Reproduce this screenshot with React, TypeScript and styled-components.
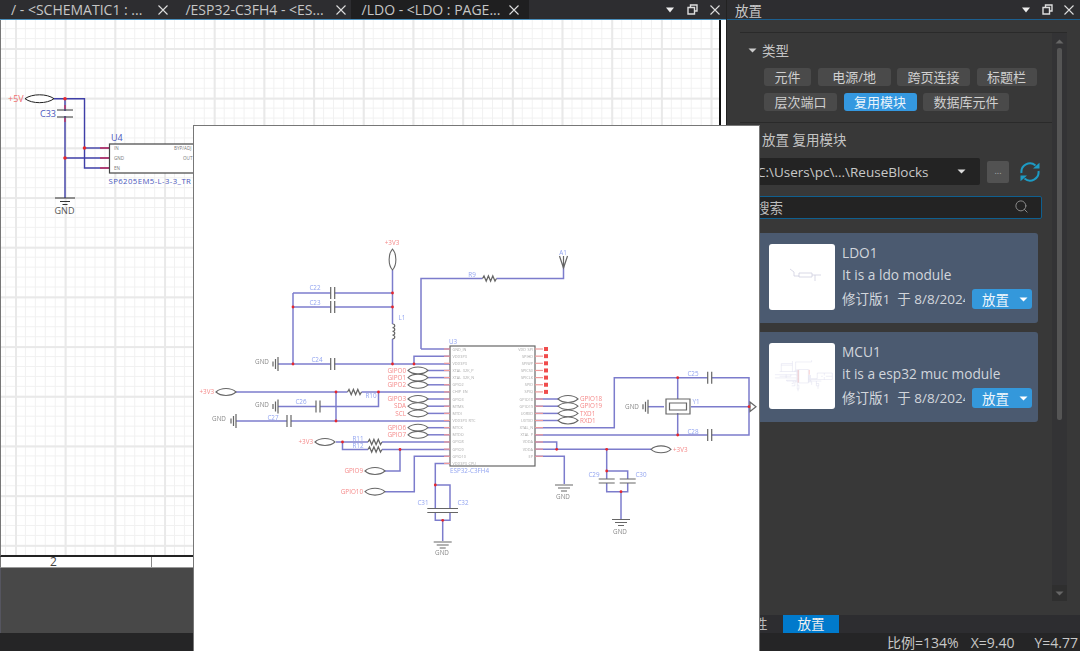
import styled, { createGlobalStyle } from 'styled-components';
import { Search } from 'lucide-react';

const PIN_TOP = 348;
const PIN_STEP = 7.15;
const pinY = (i: number) => PIN_TOP + PIN_STEP * i;

const leftPins = ['GND_IN', 'VDD3P3', 'VDD3P3', 'XTAL_32K_P', 'XTAL_32K_N', 'GPIO2', 'CHIP_EN', 'GPIO3', 'MTMS', 'MTDI', 'VDD3P3_RTC', 'MTCK', 'MTDO', 'GPIO8', 'GPIO9', 'GPIO10', 'VDD3P3_CPU'];
const rightPins = ['VDD_SPI', 'SPIHD', 'SPIWP', 'SPICS0', 'SPICLK', 'SPID', 'SPIQ', 'GPIO18', 'GPIO19', 'U0RXD', 'U0TXD', 'XTAL_N', 'XTAL_P', 'VDDA', 'VDDA', 'EP'];

const mcuWires = [
	'M391.5 269V363', 'M292 292H391.5', 'M292 306H391.5', 'M292 292V363', 'M277 363H449',
	'M413 363V355.2H449', 'M420 348V277.5H562.5V262', 'M420 348H449',
	'M235 391H449', 'M377.5 391V405.5H277', 'M335 391V420', 'M235 420H449',
	'M335 441H449', 'M341.5 441V448.5H449', 'M399 448.5V470H384', 'M449 455.3H413.3V490.7H384',
	'M449 462.4H434.3V519.3H449V484H434.3', 'M441.7 519.3V540',
	'M427 369.5H449', 'M427 376.6H449', 'M427 383.8H449', 'M427 398H449', 'M427 405.2H449', 'M427 412.4H449', 'M427 426.7H449', 'M427 433.8H449',
	'M534 398H557', 'M534 405.2H557', 'M534 412.4H557', 'M534 419.5H557',
	'M534 426.7H613.3V376.7H748V434H534', 'M676.7 376.7V398', 'M676.7 412V434', 'M690 405.7H748', 'M647 405.7H663',
	'M534 441H555.7V448.3', 'M534 448.3H650', 'M534 455.3H563.3V483',
	'M605.7 448.3V490.7H626.7V470H605.7', 'M620 490.7V518',
];

const mcuDots = [
	[391.5, 292], [391.5, 306], [292, 306], [292, 363], [391.5, 363], [413, 363], [335, 391], [377.5, 391], [335, 420],
	[341.5, 441], [399, 448.5], [434.3, 484], [441.7, 519.3], [676.7, 376.7], [676.7, 434], [748, 405.7],
	[555.7, 448.3], [605.7, 448.3], [605.7, 470], [620, 490.7],
];

const ldoWires = ['M54 98.7H84.5V168H109', 'M65 98.7V198', 'M84.5 148H109', 'M65 158H109'];

const ports: [number, number, string, boolean][] = [
	[369.5, 407, 'GIPO0', true], [376.6, 407, 'GIPO1', true], [383.8, 407, 'GIPO2', true],
	[398, 407, 'GIPO3', true], [405.2, 407, 'SDA', true], [412.4, 407, 'SCL', true],
	[426.7, 407, 'GPIO6', true], [433.8, 407, 'GPIO7', true],
	[391, 215, '+3V3', true], [441, 314, '+3V3', true], [470, 364, 'GPIO9', true], [490.7, 364, 'GPIO10', true],
	[398, 557, 'GPIO18', false], [405.2, 557, 'GPIO19', false], [412.4, 557, 'TXD1', false], [419.5, 557, 'RXD1', false],
	[448.3, 650, '+3V3', false],
];

const blueLabels: [number, number, string][] = [
	[314, 289, 'C22'], [314, 304, 'C23'], [316, 361, 'C24'], [300, 403, 'C26'], [272, 419, 'C27'],
	[401, 319, 'L1'], [471, 276, 'R9'], [370, 397, 'R10'], [357, 440, 'R11'], [357, 447, 'R12'],
	[422, 504, 'C31'], [462, 504, 'C32'], [593, 476, 'C29'], [640, 476, 'C30'],
	[692, 375, 'C25'], [692, 433, 'C28'], [695, 403, 'Y1'], [562, 254, 'A1'], [452, 343, 'U3'],
];

const HexPort = ({ x, y, width = 20 }: { x: number; y: number; width?: number }) => (
	<PortShape d={`M${x} ${y}C${x + 5} ${y - 4.6} ${x + width - 5} ${y - 4.6} ${x + width} ${y}C${x + width - 5} ${y + 4.6} ${x + 5} ${y + 4.6} ${x} ${y}Z`} />
);

const SeriesCap = ({ x, y }: { x: number; y: number }) => (
	<g>
		<Gap x={x - 2} y={y - 2} width={4} height={4} />
		<Part d={`M${x - 2} ${y - 6}v12M${x + 2} ${y - 6}v12`} />
	</g>
);

const ShuntCap = ({ x, y }: { x: number; y: number }) => (
	<g>
		<Gap x={x - 2} y={y - 2} width={4} height={4} />
		<Part d={`M${x - 8} ${y - 2}h16M${x - 8} ${y + 2}h16`} />
	</g>
);

const Resistor = ({ x, y }: { x: number; y: number }) => (
	<g>
		<Gap x={x} y={y - 2} width={14} height={4} />
		<Part d={`M${x} ${y}l1.5 -2.6l2.2 5.2l2.2 -5.2l2.2 5.2l2.2 -5.2l2.2 5.2l1.5 -2.6`} />
	</g>
);

const GroundDown = ({ x, y }: { x: number; y: number }) => (
	<Part d={`M${x - 9} ${y}h18M${x - 6} ${y + 3}h12M${x - 3} ${y + 6}h6`} />
);

const GroundLeft = ({ x, y }: { x: number; y: number }) => (
	<Part d={`M${x} ${y - 7}v14M${x - 2.5} ${y - 5}v10M${x - 5} ${y - 2.5}v5`} />
);

const McuSheet = () => (
	<PreviewSvg viewBox="193 125 565 526">
		{mcuWires.map((d, i) => (
			<BlueWire key={i} d={d} />
		))}
		<IcBody x={449} y={345} width={85} height={120} />
		{leftPins.map((name, i) => (
			<g key={name + i}>
				<PinStub d={`M443 ${pinY(i)}h6`} />
				<PinName x={451.5} y={pinY(i) + 1.5}>
					{name}
				</PinName>
			</g>
		))}
		{rightPins.map((name, i) => (
			<g key={name + i}>
				<PinStub d={`M534 ${pinY(i)}h8`} />
				<PinName x={532} y={pinY(i) + 1.5} textAnchor="end">
					{name}
				</PinName>
				{i < 7 && <NoConnect x={543} y={pinY(i) - 2} width={4} height={4} />}
			</g>
		))}
		{ports.map(([y, x, name, onLeft], i) => (
			<g key={i}>
				<HexPort x={x} y={y} />
				<RedLabel x={onLeft ? x - 2 : x + 22} y={y + 2.2} textAnchor={onLeft ? 'end' : 'start'}>
					{name}
				</RedLabel>
			</g>
		))}
		<PortShape d="M391.5 248C396 253 396 264 391.5 269C387 264 387 253 391.5 248Z" />
		<RedLabel x={391} y={244} textAnchor="middle">
			+3V3
		</RedLabel>
		<SeriesCap x={331.7} y={292} />
		<SeriesCap x={331.7} y={306} />
		<SeriesCap x={331.7} y={363} />
		<SeriesCap x={317} y={405.5} />
		<SeriesCap x={288} y={420} />
		<SeriesCap x={708.7} y={376.7} />
		<SeriesCap x={708.7} y={434} />
		<ShuntCap x={434.3} y={509.5} />
		<ShuntCap x={449} y={509.5} />
		<ShuntCap x={605.7} y={480} />
		<ShuntCap x={626.7} y={480} />
		<Resistor x={346.5} y={391} />
		<Resistor x={481.5} y={277.5} />
		<Resistor x={367} y={441} />
		<Resistor x={367} y={448.5} />
		<Gap x={390} y={323} width={3} height={15} />
		<Part d="M391.5 323c3 0 3 3.7 0 3.7c3 0 3 3.7 0 3.7c3 0 3 3.7 0 3.7c3 0 3 3.7 0 3.7" />
		<Part d="M558.5 255l4 12l4 -12M562.5 255v12" />
		<Part d="M665 398h24v15h-24zM668.5 402h17v7h-17z" />
		<GroundLeft x={277} y={363} />
		<GroundLeft x={277} y={405.5} />
		<GroundLeft x={235} y={420} />
		<GroundLeft x={647} y={405.7} />
		<GroundDown x={563} y={484} />
		<GroundDown x={620} y={518.5} />
		<GroundDown x={441.7} y={541} />
		<Part d="M749 401l6 4.7l-6 4.7Z" />
		<GrayLabel x={261} y={363} textAnchor="middle">GND</GrayLabel>
		<GrayLabel x={261} y={406} textAnchor="middle">GND</GrayLabel>
		<GrayLabel x={218} y={420} textAnchor="middle">GND</GrayLabel>
		<GrayLabel x={631} y={407.5} textAnchor="middle">GND</GrayLabel>
		<GrayLabel x={562} y={498} textAnchor="middle">GND</GrayLabel>
		<GrayLabel x={619} y={533} textAnchor="middle">GND</GrayLabel>
		<GrayLabel x={441} y={554} textAnchor="middle">GND</GrayLabel>
		{blueLabels.map(([x, y, name]) => (
			<BlueLabel key={name} x={x} y={y} textAnchor="middle">
				{name}
			</BlueLabel>
		))}
		<BlueLabel x={449} y={472}>ESP32-C3FH4</BlueLabel>
		{mcuDots.map(([x, y], i) => (
			<Dot key={i} cx={x} cy={y} r={1.4} />
		))}
	</PreviewSvg>
);

const LdoSheet = () => (
	<SheetSvg viewBox="1 20 719 534">
		{ldoWires.map((d, i) => (
			<DarkWire key={i} d={d} />
		))}
		<PinStubDark d="M100 148h10M100 158h10M100 168h10M65 105v4M65 118v4" />
		<Gap x={60} y={111} width={10} height={5} />
		<SheetPart d="M57 110h16M57 117h16M55 198h20M60 201.5h10M62.5 204.5h5" />
		<SheetPort d="M25 98.7C32 93.5 47 93.5 54 98.7C47 104 32 104 25 98.7Z" />
		<UnitBox x={109.5} y={144} width={100} height={29} />
		<SheetRed x={8} y={102}>+5V</SheetRed>
		<SheetBlue x={40} y={117}>C33</SheetBlue>
		<SheetBlue x={111} y={141}>U4</SheetBlue>
		<SheetBlueSmall x={108.5} y={184}>SP6205EM5-L-3-3_TR</SheetBlueSmall>
		<SheetGray x={64.5} y={214} textAnchor="middle">GND</SheetGray>
		<SheetPin x={114} y={150}>IN</SheetPin>
		<SheetPin x={114} y={160}>GND</SheetPin>
		<SheetPin x={114} y={170}>EN</SheetPin>
		<SheetPin x={174} y={150}>BYP/ADJ</SheetPin>
		<SheetPin x={183} y={160}>OUT</SheetPin>
		<Dot cx={65} cy={98.7} r={1.8} />
		<Dot cx={84.5} cy={148} r={1.8} />
		<Dot cx={65} cy={158} r={1.8} />
	</SheetSvg>
);

const WindowControls = () => (
	<>
		<svg width="10" height="6" viewBox="0 0 10 6">
			<path d="M1 0.5h8L5 5.5Z" fill="#eee" />
		</svg>
		<svg width="11" height="11" viewBox="0 0 11 11">
			<path d="M3.5 3V1H10V7H8M1 3.5H7.5V10H1Z" fill="none" stroke="#ddd" strokeWidth="1.4" />
		</svg>
		<CloseMark />
	</>
);

const CloseMark = () => (
	<svg width="10" height="10" viewBox="0 0 10 10">
		<path d="M0.5 0.5L9.5 9.5M9.5 0.5L0.5 9.5" stroke="#ddd" strokeWidth="1.1" />
	</svg>
);

const Caret = ({ color = '#ddd' }: { color?: string }) => (
	<svg width="9" height="5" viewBox="0 0 9 5">
		<path d="M0.5 0.5h8L4.5 4.5Z" fill={color} />
	</svg>
);

const RefreshIcon = () => (
	<svg width="22" height="22" viewBox="0 0 22 22" fill="none">
		<path d="M2.5 12A8.5 8.5 0 0 1 16.5 4.5" stroke="#1d9bc4" strokeWidth="2" />
		<path d="M19.5 10A8.5 8.5 0 0 1 5.5 17.5" stroke="#1d9bc4" strokeWidth="2" />
		<path d="M14 7.5h6.5V1.8Z" fill="#1d9bc4" />
		<path d="M8 14.5H1.5v5.7Z" fill="#1d9bc4" />
	</svg>
);

const docTabs = [
	{ title: '/ - <SCHEMATIC1 : ...', gap: 16, trail: 6 },
	{ title: '/ESP32-C3FH4 - <ES...', gap: 12, trail: 5 },
	{ title: '/LDO - <LDO : PAGE...', gap: 9, trail: 10, active: true },
];

const chipRows = [
	[{ name: '元件' }, { name: '电源/地', wide: true }, { name: '跨页连接' }, { name: '标题栏' }],
	[{ name: '层次端口' }, { name: '复用模块', active: true }, { name: '数据库元件' }],
];

const App = () => {
	return (
		<>
			<GlobalStyle />
			<Shell>
				<DocumentArea>
					<TabBar>
						{docTabs.map((tab) => (
							<DocTab key={tab.title} $active={tab.active} $gap={tab.gap} $trail={tab.trail}>
								<TabTitle>{tab.title}</TabTitle>
								<CloseMark />
							</DocTab>
						))}
						<TabControls>
							<WindowControls />
						</TabControls>
					</TabBar>
					<CanvasRow>
						<Sheet>
							<LdoSheet />
						</Sheet>
						<SheetEdge />
					</CanvasRow>
					<TitleStrip>
						<TitleZone>2</TitleZone>
					</TitleStrip>
					<EmptyArea />
				</DocumentArea>

				<SidePanel>
					<PanelHeader>
						<PanelTitle>放置</PanelTitle>
						<HeaderControls>
							<WindowControls />
						</HeaderControls>
					</PanelHeader>
					<PanelBody>
						<ScrollFrame>
							<PanelContent>
								<TypeSection>
									<SectionHeading>
										<HeadingCaret>
											<Caret color="#ccc" />
										</HeadingCaret>
										类型
									</SectionHeading>
									{chipRows.map((row, i) => (
										<ChipRow key={i}>
											{row.map((chip) => (
												<TypeChip key={chip.name} $active={chip.active} $wide={chip.wide}>
													{chip.name}
												</TypeChip>
											))}
										</ChipRow>
									))}
								</TypeSection>
								<PlaceSection>
									<SectionHeading>
										<HeadingCaret>
											<Caret color="#ccc" />
										</HeadingCaret>
										放置 复用模块
									</SectionHeading>
									<PathRow>
										<PathSelect>
											<span>C:\Users\pc\...\ReuseBlocks</span>
											<Caret />
										</PathSelect>
										<DotsButton>...</DotsButton>
										<RefreshIcon />
									</PathRow>
									<SearchBox>
										<span>搜索</span>
										<Search size={15} color="#8a8a8a" strokeWidth={1.6} />
									</SearchBox>
									<CardList>
										<BlockCard>
											<Thumb>
												<svg viewBox="0 0 66 66" width="66" height="66">
													<ThumbLines d="M21 25l4 3v4h5M30 29h13v4H30zM43 31h9M46 31v6" />
												</svg>
											</Thumb>
											<CardText>
												<CardName>LDO1</CardName>
												<CardDesc>It is a ldo module</CardDesc>
												<CardFoot>
													<CardMeta>修订版1&nbsp; 于 8/8/2024</CardMeta>
													<PlaceButton>
														放置
														<Caret color="#fff" />
													</PlaceButton>
												</CardFoot>
											</CardText>
										</BlockCard>
										<BlockCard>
											<Thumb>
												<svg viewBox="182 108 590 590" width="66" height="66">
													<ThumbGroup>
														{mcuWires.map((d, i) => (
															<path key={i} d={d} />
														))}
														<path d="M449 345h85v120h-85z" />
													</ThumbGroup>
													<ThumbPins d="M443 348V462M542 348V391" />
												</svg>
											</Thumb>
											<CardText>
												<CardName>MCU1</CardName>
												<CardDesc>it is a esp32 muc module</CardDesc>
												<CardFoot>
													<CardMeta>修订版1&nbsp; 于 8/8/2024</CardMeta>
													<PlaceButton>
														放置
														<Caret color="#fff" />
													</PlaceButton>
												</CardFoot>
											</CardText>
										</BlockCard>
									</CardList>
								</PlaceSection>
							</PanelContent>
							<ScrollTrack>
								<svg width="9" height="5" viewBox="0 0 9 5">
									<path d="M0.5 4.5h8L4.5 0.5Z" fill="#666" />
								</svg>
								<ScrollThumb />
								<ScrollEnd>
									<Caret color="#666" />
								</ScrollEnd>
							</ScrollTrack>
						</ScrollFrame>
					</PanelBody>
					<PanelTabs>
						<PanelTab>属性</PanelTab>
						<PanelTab $active>放置</PanelTab>
					</PanelTabs>
				</SidePanel>

				<StatusBar>
					<span>比例=134%</span>
					<span>X=9.40</span>
					<span>Y=4.77</span>
				</StatusBar>

				<PreviewImage>
					<McuSheet />
				</PreviewImage>
			</Shell>
		</>
	);
};

const GlobalStyle = createGlobalStyle`
	html, body {
		margin: 0;
		height: 100%;
		overflow: hidden;
		background: #2d2d30;
	}
	body {
		font-family: 'Open Sans', 'Noto Sans CJK SC', sans-serif;
	}
`;

const Shell = styled.div`
	position: relative;
	width: 1080px;
	height: 651px;
	display: grid;
	grid-template-columns: 727px 353px;
	grid-template-rows: 633px 18px;
	overflow: hidden;
	color: #ccc;
`;

const DocumentArea = styled.div`
	display: flex;
	flex-direction: column;
	min-height: 0;
	border-right: 1px solid #222;
`;

const TabBar = styled.div`
	height: 19px;
	flex: none;
	display: flex;
	background: #2d2d30;
	border-bottom: 1px solid #4a90bd;
`;

const DocTab = styled.div<{ $active?: boolean; $gap: number; $trail: number }>`
	padding: 0 ${(p) => p.$trail}px 0 11px;
	display: flex;
	align-items: center;
	gap: ${(p) => p.$gap}px;
	background: ${(p) => (p.$active ? '#1f1f20' : 'transparent')};
`;

const TabTitle = styled.span`
	font-size: 14px;
	line-height: 19px;
	white-space: nowrap;
	color: #c6c6c6;
`;

const TabControls = styled.div`
	margin-left: auto;
	padding-right: 6px;
	display: flex;
	align-items: center;
	gap: 12px;
`;

const CanvasRow = styled.div`
	flex: 1;
	min-height: 0;
	display: flex;
	background: #fff;
	border-left: 1px solid #777;
	border-bottom: 2px solid #222;
`;

const Sheet = styled.div`
	flex: 1;
	min-width: 0;
	background-color: #fff;
	background-image:
		linear-gradient(to right, #e9e9e9 1.5px, transparent 1.5px),
		linear-gradient(to bottom, #e9e9e9 1.5px, transparent 1.5px),
		linear-gradient(to right, #f1f1f1 1px, transparent 1px),
		linear-gradient(to bottom, #f1f1f1 1px, transparent 1px);
	background-size: 49.7px 49.7px, 49.7px 49.7px, 9.94px 9.94px, 9.94px 9.94px;
	background-position: 14px 28px;
`;

const SheetEdge = styled.div`
	width: 5px;
	flex: none;
	background: #fff;
	border-left: 2px solid #111;
`;

const TitleStrip = styled.div`
	height: 10px;
	flex: none;
	display: flex;
	background: #fff;
	border-left: 1px solid #777;
	border-bottom: 1px solid #999;
`;

const TitleZone = styled.div`
	width: 151px;
	box-sizing: border-box;
	padding-left: 49px;
	border-right: 1px solid #888;
	font-size: 12px;
	line-height: 10px;
	color: #444;
`;

const EmptyArea = styled.div`
	height: 65px;
	flex: none;
	background: #484848;
	border-left: 1px solid #55555f;
`;

const SidePanel = styled.div`
	display: flex;
	flex-direction: column;
	min-height: 0;
	background: #2d2d30;
`;

const PanelHeader = styled.div`
	height: 19px;
	flex: none;
	display: flex;
	align-items: center;
	justify-content: space-between;
	padding: 0 6px 0 8px;
	border-bottom: 1px solid #1c5f8f;
`;

const PanelTitle = styled.span`
	font-size: 13.5px;
	color: #c8c8c8;
`;

const HeaderControls = styled.div`
	display: flex;
	align-items: center;
	gap: 11px;
`;

const PanelBody = styled.div`
	flex: 1;
	min-height: 0;
	display: flex;
	padding: 12px 13px 14px;
	background: #383838;
`;

const ScrollFrame = styled.div`
	flex: 1;
	min-width: 0;
	display: flex;
	border-top: 1px solid #2a2a2a;
`;

const PanelContent = styled.div`
	flex: 1;
	min-width: 0;
`;

const TypeSection = styled.div`
	padding: 7px 0 11px;
	border-bottom: 1px solid #2a2a2a;
`;

const SectionHeading = styled.div`
	display: flex;
	align-items: center;
	height: 20px;
	font-size: 13.5px;
	color: #c4c4c4;
	padding-left: 8px;
	margin-bottom: 8px;
`;

const HeadingCaret = styled.span`
	width: 14px;
	display: flex;
	align-items: center;
`;

const ChipRow = styled.div`
	display: flex;
	gap: 6.5px;
	margin-left: 24px;
	& + & {
		margin-top: 7px;
	}
`;

const TypeChip = styled.div<{ $active?: boolean; $wide?: boolean }>`
	height: 18px;
	padding: 0 10.5px;
	min-width: ${(p) => (p.$wide ? '52px' : '0')};
	border-radius: 3px;
	font-size: 13px;
	line-height: 18px;
	text-align: center;
	background: ${(p) => (p.$active ? '#3498e0' : '#4a4a4a')};
	color: ${(p) => (p.$active ? '#eaf4fc' : '#d0d0d0')};
`;

const PlaceSection = styled.div`
	padding-top: 6px;
`;

const PathRow = styled.div`
	display: flex;
	align-items: center;
	gap: 7px;
	margin-top: 9px;
	margin-left: 8px;
	width: 294px;
`;

const PathSelect = styled.div`
	width: 232px;
	height: 27px;
	box-sizing: border-box;
	padding: 0 14px 0 9px;
	display: flex;
	align-items: center;
	justify-content: space-between;
	border-radius: 2px;
	background: #232323;
	font-size: 13.5px;
	color: #c8c8c8;
`;

const DotsButton = styled.div`
	width: 22px;
	height: 22px;
	border-radius: 2px;
	background: #525252;
	color: #aaa;
	font-size: 9px;
	line-height: 20px;
	text-align: center;
	margin-right: 3px;
`;

const SearchBox = styled.div`
	width: 294px;
	height: 23px;
	box-sizing: border-box;
	margin: 11px 0 14px 8px;
	padding: 0 12px 2px 7px;
	display: flex;
	align-items: center;
	justify-content: space-between;
	background: #232323;
	border: 1px solid #0f5f8f;
	border-radius: 2px;
	font-size: 13.5px;
	color: #bdbdbd;
`;

const CardList = styled.div`
	display: flex;
	flex-direction: column;
	gap: 9px;
	margin-left: 5px;
	width: 293px;
`;

const BlockCard = styled.div`
	height: 90px;
	box-sizing: border-box;
	padding: 11px 6px 0 24px;
	display: flex;
	gap: 7px;
	border-radius: 3px;
	background: #4b5a70;
`;

const Thumb = styled.div`
	width: 66px;
	height: 66px;
	flex: none;
	border-radius: 3px;
	background: #fff;
	overflow: hidden;
`;

const ThumbLines = styled.path`
	fill: none;
	stroke: #cfcfe0;
	stroke-width: 0.8;
`;

const ThumbGroup = styled.g`
	fill: none;
	stroke: #cfcfe8;
	stroke-width: 3;
`;

const ThumbPins = styled.path`
	fill: none;
	stroke: #f6c4c4;
	stroke-width: 7;
`;

const CardText = styled.div`
	flex: 1;
	min-width: 0;
	color: #d2d6dc;
`;

const CardName = styled.div`
	font-size: 13.7px;
	line-height: 18px;
`;

const CardDesc = styled.div`
	margin-top: 3px;
	font-size: 13.7px;
	line-height: 20px;
	white-space: nowrap;
`;

const CardFoot = styled.div`
	margin-top: 4px;
	display: flex;
	align-items: center;
	justify-content: space-between;
`;

const CardMeta = styled.div`
	width: 123px;
	overflow: hidden;
	white-space: nowrap;
	font-size: 13.5px;
	line-height: 20px;
`;

const PlaceButton = styled.div`
	width: 60px;
	height: 20px;
	box-sizing: border-box;
	padding: 0 4px 0 10px;
	display: flex;
	align-items: center;
	justify-content: space-between;
	border-radius: 3px;
	background: #3498db;
	color: #eef6fc;
	font-size: 13.5px;
`;

const ScrollTrack = styled.div`
	width: 15px;
	flex: none;
	display: flex;
	flex-direction: column;
	align-items: center;
	padding-top: 6px;
	background: #333335;
`;

const ScrollThumb = styled.div`
	width: 5px;
	height: 372px;
	margin-top: 4px;
	border-radius: 2px;
	background: #555;
`;

const ScrollEnd = styled.div`
	margin-top: auto;
	width: 15px;
	height: 16px;
	display: flex;
	align-items: center;
	justify-content: center;
	background: #2f2f2f;
`;

const PanelTabs = styled.div`
	height: 18px;
	flex: none;
	display: flex;
	gap: 14px;
	padding-left: 12px;
	background: #2d2d30;
`;

const PanelTab = styled.div<{ $active?: boolean }>`
	width: ${(p) => (p.$active ? '56px' : '30px')};
	font-size: 13.5px;
	line-height: 18px;
	text-align: center;
	background: ${(p) => (p.$active ? '#007acc' : 'transparent')};
	color: ${(p) => (p.$active ? '#f0f0f0' : '#bbb')};
`;

const StatusBar = styled.div`
	grid-column: 1 / -1;
	display: flex;
	justify-content: flex-end;
	align-items: center;
	gap: 12px;
	padding-right: 2px;
	background: #252526;
	font-size: 14px;
	color: #c8c8c8;
	span:last-child {
		margin-left: 8px;
	}
`;

const PreviewImage = styled.div`
	position: absolute;
	left: 193px;
	top: 125px;
	width: 567px;
	height: 526px;
	box-sizing: border-box;
	background: #fff;
	border: 1px solid #777;
	border-bottom: 0;
`;

const PreviewSvg = styled.svg`
	display: block;
	width: 565px;
	height: 526px;
	filter: blur(0.4px);
	font-family: 'Open Sans', sans-serif;
`;

const SheetSvg = styled.svg`
	display: block;
	width: 719px;
	height: 534px;
	font-family: 'Open Sans', sans-serif;
`;

const BlueWire = styled.path`
	fill: none;
	stroke: #7c7ccc;
	stroke-width: 1.5;
`;

const DarkWire = styled.path`
	fill: none;
	stroke: #3f3fa8;
	stroke-width: 1.4;
`;

const PinStub = styled.path`
	fill: none;
	stroke: #ef9a9a;
	stroke-width: 1.2;
`;

const PinStubDark = styled.path`
	fill: none;
	stroke: #c2305f;
	stroke-width: 1.3;
`;

const Part = styled.path`
	fill: none;
	stroke: #666;
	stroke-width: 1.2;
`;

const SheetPart = styled.path`
	fill: none;
	stroke: #333;
	stroke-width: 1;
`;

const SheetPort = styled.path`
	fill: #fff;
	stroke: #222;
	stroke-width: 1;
`;

const PortShape = styled.path`
	fill: #fff;
	stroke: #666;
	stroke-width: 1.1;
`;

const Gap = styled.rect`
	fill: #fff;
`;

const IcBody = styled.rect`
	fill: #fff;
	stroke: #666;
	stroke-width: 1.2;
`;

const UnitBox = styled.rect`
	fill: #fff;
	stroke: #444;
	stroke-width: 1.2;
`;

const NoConnect = styled.rect`
	fill: #f04c4c;
`;

const Dot = styled.circle`
	fill: #e6262c;
`;

const RedLabel = styled.text`
	font-size: 6.3px;
	fill: #f58a8a;
`;

const BlueLabel = styled.text`
	font-size: 6.3px;
	fill: #92a4f0;
`;

const GrayLabel = styled.text`
	font-size: 6.3px;
	fill: #8a8a8a;
`;

const PinName = styled.text`
	font-size: 3.8px;
	fill: #aaa;
`;

const SheetRed = styled.text`
	font-size: 9px;
	fill: #f07070;
`;

const SheetBlue = styled.text`
	font-size: 9px;
	fill: #4a58bc;
`;

const SheetBlueSmall = styled.text`
	font-size: 7.8px;
	letter-spacing: 0.4px;
	fill: #4a58bc;
`;

const SheetGray = styled.text`
	font-size: 9px;
	fill: #555;
`;

const SheetPin = styled.text`
	font-size: 4.6px;
	fill: #777;
`;

export default App;
